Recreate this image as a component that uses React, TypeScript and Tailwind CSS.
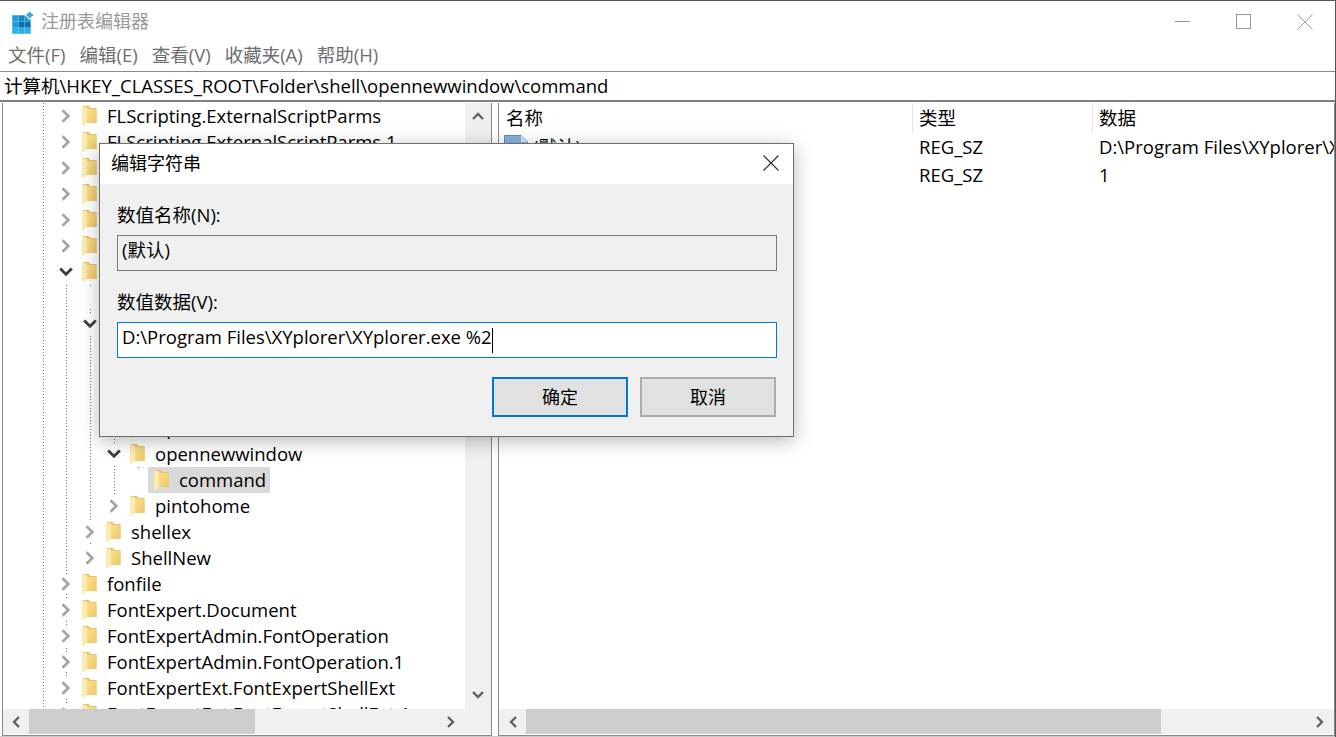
import React from "react"

type Row = { name: string; level: number; state?: "open" | "closed" | "leaf"; selected?: boolean }

const rows: Row[] = [
  { name: "FLScripting.ExternalScriptParms", level: 0 },
  { name: "FLScripting.ExternalScriptParms.1", level: 0 },
  { name: "FLScripting.FileSystem", level: 0 },
  { name: "FLScripting.FileSystem.1", level: 0 },
  { name: "FLScripting.Script", level: 0 },
  { name: "FLScripting.Script.1", level: 0 },
  { name: "Folder", level: 0, state: "open" },
  { name: "DefaultIcon", level: 1, state: "leaf" },
  { name: "shell", level: 1, state: "open" },
  { name: "explore", level: 2 },
  { name: "find", level: 2 },
  { name: "opennewprocess", level: 2 },
  { name: "open", level: 2 },
  { name: "opennewwindow", level: 2, state: "open" },
  { name: "command", level: 3, state: "leaf", selected: true },
  { name: "pintohome", level: 2 },
  { name: "shellex", level: 1 },
  { name: "ShellNew", level: 1 },
  { name: "fonfile", level: 0 },
  { name: "FontExpert.Document", level: 0 },
  { name: "FontExpertAdmin.FontOperation", level: 0 },
  { name: "FontExpertAdmin.FontOperation.1", level: 0 },
  { name: "FontExpertExt.FontExpertShellExt", level: 0 },
  { name: "FontExpertExt.FontExpertShellExt.1", level: 0 },
]

const Folder = () => (
  <svg width="15" height="21" viewBox="0 0 15 21" className="shrink-0">
    <defs>
      <linearGradient id="folderBody" x1="0" y1="0" x2="1" y2="1">
        <stop offset="0" stopColor="#f8e08f" />
        <stop offset="1" stopColor="#eec766" />
      </linearGradient>
    </defs>
    <path d="M1 0H7L8 2H14.5V17H1Z" fill="#e9c463" />
    <path d="M5 3H14.5V17H5Z" fill="url(#folderBody)" />
    <path d="M0 1H5V16L1.5 20.5L0 19Z" fill="#fcebaf" />
  </svg>
)

const Chevron = ({ dir, color = "#a6a6a6", size = 12 }: { dir: "right" | "down" | "left" | "up"; color?: string; size?: number }) => {
  const d = { right: "M3 1L8 6L3 11", left: "M9 1L4 6L9 11", down: "M1 3L6 8L11 3", up: "M1 9L6 4L11 9" }[dir]
  return (
    <svg width={size} height={size} viewBox="0 0 12 12" className="shrink-0">
      <path d={d} fill="none" stroke={color} strokeWidth="2.4" />
    </svg>
  )
}

const TreeRow = ({ row }: { row: Row }) => {
  const indent = [53, 77, 101, 123][row.level]
  return (
    <div className="h-[26px] shrink-0 flex items-center relative" style={{ paddingLeft: indent }}>
      <span className="w-[20px] h-[20px] flex items-center justify-center shrink-0 bg-white">
        {row.state === "open" && <Chevron dir="down" color="#404040" size={14} />}
        {row.state === undefined && <Chevron dir="right" size={14} />}
      </span>
      <span className={row.selected ? "flex items-center h-[26px] bg-[#d9d9d9] pl-[6px] pr-[4px] ml-[2px]" : "flex items-center h-[26px] ml-[6px]"}>
        <Folder />
        <span className="ml-[10px] whitespace-nowrap">{row.name}</span>
      </span>
    </div>
  )
}

const TreeLines = () => (
  <svg className="absolute left-0 top-0 pointer-events-none" width="462" height="606" viewBox="0 103 462 606">
    <g stroke="#6e6e6e" strokeWidth="1" strokeDasharray="1 2" fill="none">
      <path d="M40.5 103V708" />
      <path d="M63.5 285V708" />
      <path d="M87.5 285V546" />
      <path d="M88 299.5H97" />
      <path d="M111.5 430V494" />
      <path d="M135.5 467V481.5H146" />
    </g>
  </svg>
)

const HScroll = ({ width, corner, arrow = 26 }: { width: number; corner?: boolean; arrow?: number }) => (
  <div className="h-[25px] shrink-0 bg-[#f0f0f0] flex items-center mb-px">
    <span className="flex justify-center" style={{ width: arrow }}><Chevron dir="left" color="#606060" /></span>
    <div className="flex-1 h-full">
      <div className="h-full bg-[#cdcdcd]" style={{ width }} />
    </div>
    <span className="w-[28px] flex justify-center"><Chevron dir="right" color="#606060" /></span>
    {corner && <span className="w-[26px] shrink-0" />}
  </div>
)

const RegIcon = () => (
  <svg width="24" height="24" viewBox="0 0 24 24" className="shrink-0">
    <path d="M0.5 0.5H17L23.5 7V22H0.5Z" fill="#86b2dd" stroke="#5f8cbb" />
    <path d="M17 0.5V7H23.5Z" fill="#d4e5f5" />
  </svg>
)

const Dialog = () => (
  <div className="absolute left-[99px] top-[142px] w-[695px] h-[294px] bg-[#f0f0f0] border border-[#6f6f6f] shadow-[0_4px_18px_rgba(0,0,0,0.28)] flex flex-col z-10">
    <div className="h-[40px] shrink-0 bg-white flex items-center justify-between pl-[11px] pr-[14px] pb-[2px] text-[18px]">
      <span>编辑字符串</span>
      <svg width="16" height="16" viewBox="0 0 16 16"><path d="M0.5 0.5L15.5 15.5M15.5 0.5L0.5 15.5" stroke="#333" strokeWidth="1.2" /></svg>
    </div>
    <div className="flex-1 flex flex-col pl-[17px] pr-[16px]">
      <div className="mt-[18px] h-[26px] flex items-center">数值名称(N):</div>
      <div className="mt-[7px] h-[36px] border border-[#7a7a7a] bg-[#f0f0f0] flex items-center pl-[4px] pb-[6px]">(默认)</div>
      <div className="mt-[18px] h-[26px] flex items-center">数值数据(V):</div>
      <div className="mt-[7px] h-[36px] border border-[#0078d7] bg-white flex items-center pl-[4px]">
        <span className="pb-[6px]">D:\Program Files\XYplorer\XYplorer.exe %2</span>
        <span className="w-px h-[25px] bg-black" />
      </div>
      <div className="mt-[19px] flex gap-[12px] pl-[375px]">
        <button className="w-[136px] h-[40px] bg-[#e1e1e1] border-2 border-[#0078d7] text-[18px]">确定</button>
        <button className="w-[136px] h-[40px] bg-[#e1e1e1] border-2 border-[#adadad] text-[18px]">取消</button>
      </div>
    </div>
  </div>
)

export default function App() {
  return (
    <div className="w-[1336px] h-[737px] relative overflow-hidden bg-white text-[18.5px] text-black font-['Open_Sans','Noto_Sans_CJK_SC',sans-serif] flex flex-col border-t border-r border-[#555555]">
      {/* title bar */}
      <div className="h-[41px] shrink-0 flex items-center pl-[12px] text-[18px] text-[#999999]">
        <svg width="23" height="24" viewBox="0 0 23 24" className="shrink-0">
          <rect x="0" y="5" width="19" height="19" fill="#8fd3f0" />
          <rect x="0.5" y="5.5" width="5.5" height="5.5" fill="#1b9bd7" />
          <rect x="6.5" y="5.5" width="6" height="5.5" fill="#1288c8" />
          <rect x="13" y="5.5" width="5.5" height="5.5" fill="#1b9bd7" />
          <rect x="0.5" y="11.5" width="5.5" height="6" fill="#1b9bd7" />
          <rect x="6.5" y="11.5" width="6" height="6" fill="#0b6fb0" />
          <rect x="13" y="11.5" width="5.5" height="6" fill="#0b6fb0" />
          <rect x="0.5" y="18" width="5.5" height="5.5" fill="#2ab0e4" />
          <rect x="6.5" y="18" width="6" height="5.5" fill="#2ab0e4" />
          <rect x="13" y="18" width="5.5" height="5.5" fill="#2ab0e4" />
          <path d="M17.5 0L23 5L17.5 10L12.5 5Z" fill="#ffffff" />
          <path d="M17.5 1.5L21.5 5L17.5 8.5L14 5Z" fill="#4aa3d8" />
        </svg>
        <span className="ml-[6px]">注册表编辑器</span>
        <div className="ml-auto flex items-center gap-[45px] pr-[22px]">
          <svg width="16" height="16" viewBox="0 0 16 16"><path d="M0 7.5H15" stroke="#999999" /></svg>
          <svg width="16" height="16" viewBox="0 0 16 16"><rect x="0.5" y="0.5" width="14" height="14" fill="none" stroke="#999999" /></svg>
          <svg width="16" height="16" viewBox="0 0 16 16"><path d="M0.5 0.5L15.5 15.5M15.5 0.5L0.5 15.5" stroke="#999999" /></svg>
        </div>
      </div>
      {/* menu */}
      <div className="h-[26px] mb-[3px] shrink-0 flex items-center pl-[8px] gap-[14px] text-[#6d6d6d]">
        <span>文件(F)</span>
        <span>编辑(E)</span>
        <span>查看(V)</span>
        <span>收藏夹(A)</span>
        <span>帮助(H)</span>
      </div>
      {/* address */}
      <div className="h-[31px] shrink-0 border-t border-[#8a8a8a] border-b-2 border-b-[#808080] flex items-center pl-[4px] whitespace-nowrap">
        计算机\HKEY_CLASSES_ROOT\Folder\shell\opennewwindow\command
      </div>
      {/* panes */}
      <div className="flex-1 min-h-0 flex pl-[2px] pt-px">
        <div className="w-[490px] shrink-0 border-r border-l border-b border-[#8a8a8a] flex flex-col">
          <div className="flex-1 min-h-0 flex">
            <div className="flex-1 min-w-0 overflow-hidden relative">
              <TreeLines />
              <div className="flex flex-col relative">
                {rows.map((r) => <TreeRow key={r.name} row={r} />)}
              </div>
            </div>
            <div className="w-[26px] shrink-0 bg-[#f0f0f0] flex flex-col items-center justify-between pt-[7px] pb-[8px]">
              <Chevron dir="up" color="#606060" />
              <Chevron dir="down" color="#606060" />
            </div>
          </div>
          <HScroll width={226} corner />
        </div>
        <div className="w-[6px] shrink-0" />
        <div className="flex-1 min-w-0 border-l border-r border-b border-[#8a8a8a] flex flex-col">
          <div className="flex-1 min-h-0 overflow-hidden">
            <div className="h-[30px] flex items-center">
              <span className="w-[414px] shrink-0 pl-[7px] border-r border-[#e5e5e5] h-full flex items-center">名称</span>
              <span className="w-[180px] shrink-0 pl-[6px] border-r border-[#e5e5e5] h-full flex items-center">类型</span>
              <span className="pl-[6px]">数据</span>
            </div>
            <div className="h-[28px] flex items-center whitespace-nowrap">
              <span className="w-[414px] shrink-0 pl-[5px] flex items-center"><RegIcon /><span className="ml-[5px]">(默认)</span></span>
              <span className="w-[180px] shrink-0 pl-[6px]">REG_SZ</span>
              <span className="pl-[6px]">D:\Program Files\XYplorer\XYplorer.exe %2</span>
            </div>
            <div className="h-[28px] flex items-center whitespace-nowrap">
              <span className="w-[414px] shrink-0 pl-[5px] flex items-center"><RegIcon /><span className="ml-[5px]">DelegateExecute</span></span>
              <span className="w-[180px] shrink-0 pl-[6px]">REG_SZ</span>
              <span className="pl-[6px]">1</span>
            </div>
          </div>
          <HScroll width={635} arrow={27} />
        </div>
      </div>
      <div className="h-px shrink-0 bg-[#c8c8c8]" />
      <Dialog />
    </div>
  )
}
